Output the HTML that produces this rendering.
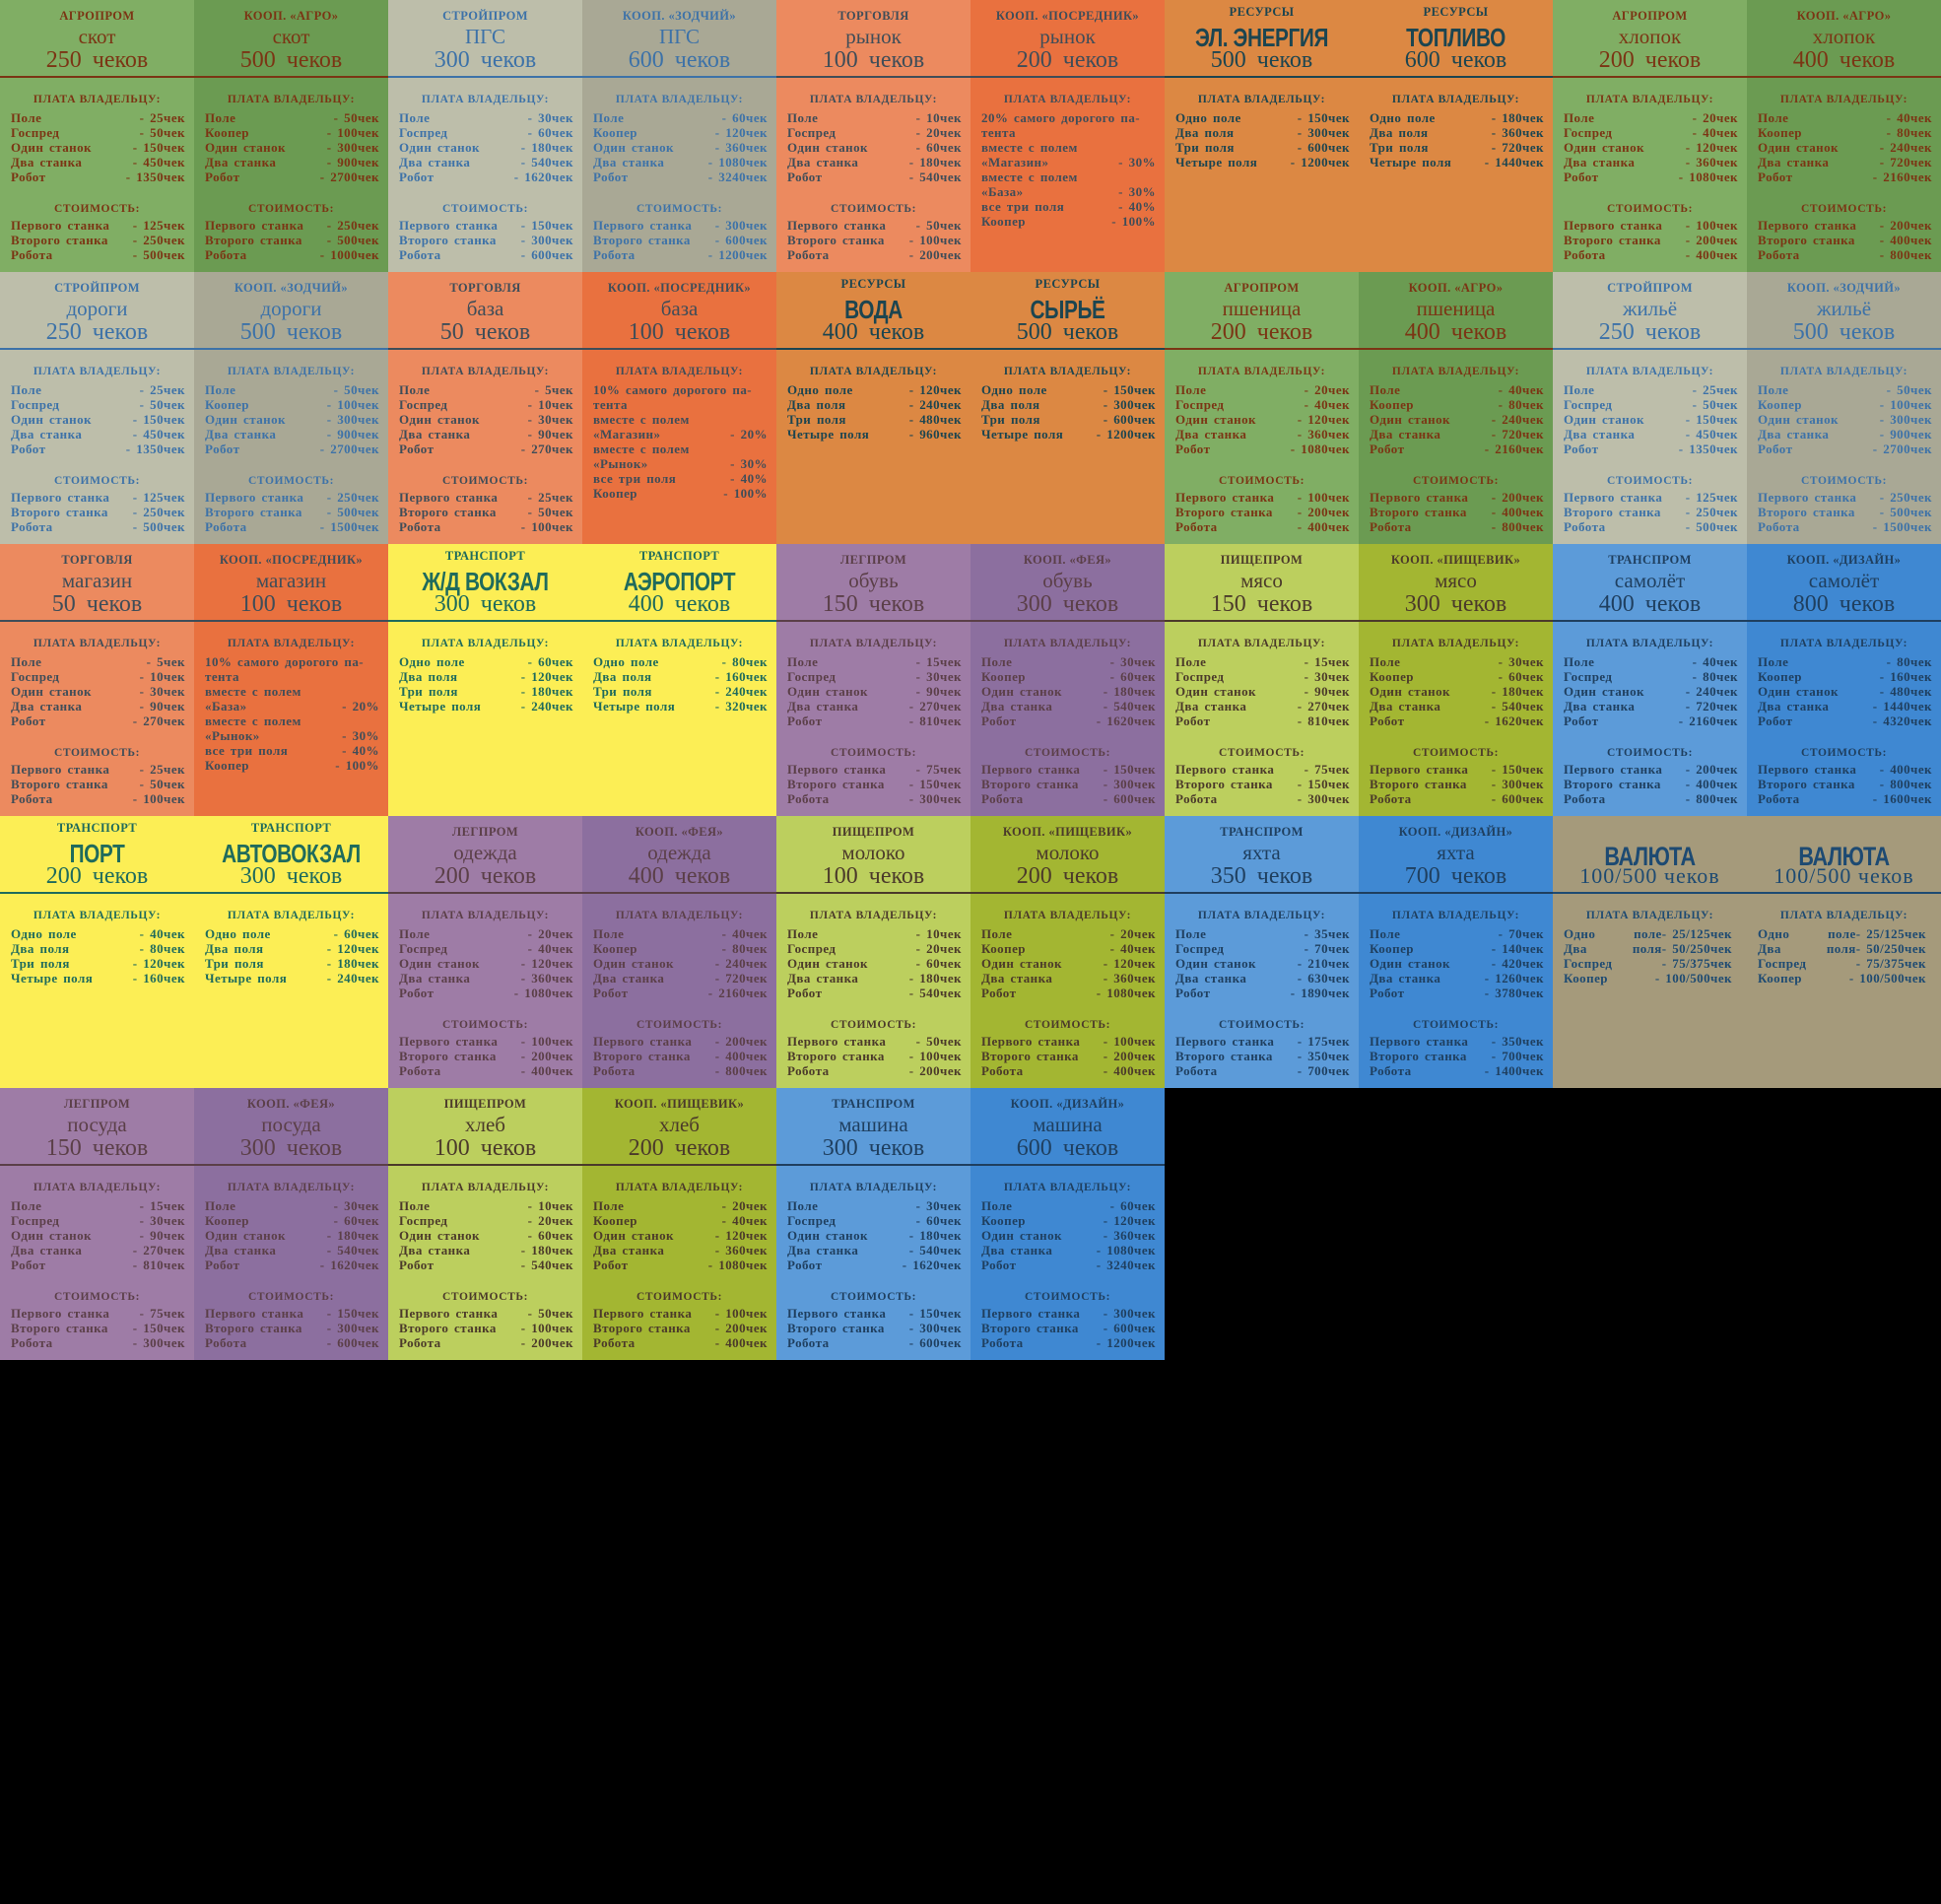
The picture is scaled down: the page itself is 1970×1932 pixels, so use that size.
<!DOCTYPE html>
<html><head><meta charset="utf-8"><style>
*{margin:0;padding:0;box-sizing:border-box}
body{width:1970px;height:1932px;background:#000;position:relative;overflow:hidden;font-family:"Liberation Serif","DejaVu Serif",serif}
.c{position:absolute;width:197px;height:276px}
.k{position:absolute;top:8px;left:0;width:100%;text-align:center;font-weight:bold;font-size:12.5px;letter-spacing:.4px;line-height:16px}
.n{position:absolute;top:25px;left:0;width:100%;text-align:center;font-size:21px;line-height:24px}
.p{position:absolute;top:47px;left:0;width:100%;text-align:center;font-size:24px;line-height:28px;word-spacing:5px}
.b{position:absolute;top:24px;left:0;width:100%;text-align:center;font-family:"Liberation Sans",sans-serif;font-weight:bold;font-size:26px;line-height:28px;letter-spacing:-.5px;transform:scaleX(.8)}
.ln{position:absolute;top:77px;left:0;width:100%;height:2px}
.h{position:absolute;top:94px;left:0;width:100%;text-align:center;font-weight:bold;font-size:11.5px;letter-spacing:.6px;line-height:15px}
.h2{top:205px}
.L{position:absolute;top:112px;left:11px;right:9px}
.L2{top:221px}
.r{display:flex;justify-content:space-between;font-weight:bold;font-size:13px;line-height:15px;white-space:nowrap;letter-spacing:.45px;word-spacing:2px}
.ag{background:#80ae64;color:#7b3514}.ag2{background:#6b9b52;color:#7b3514}
.st{background:#bdbeaa;color:#3d72a8}.st2{background:#a9a895;color:#3d72a8}
.tg{background:#ec8a5f;color:#3f4d58}.tg2{background:#e9713f;color:#3f4d58}
.rs{background:#dc8843;color:#1c4550}
.ye{background:#fcee55;color:#1f6b5c}
.lg{background:#9e7ca6;color:#5b3f48}.lg2{background:#8c6f9f;color:#5b3f48}
.pi{background:#bccf5e;color:#4b3a2a}.pi2{background:#a3b632;color:#4b3a2a}
.tr{background:#5c9bd9;color:#1f3f5f}.tr2{background:#3f88d2;color:#1f3f5f}
.va{background:#a59a7b;color:#1d4a72}
.ln{background:currentColor}
.rs .k,.ye .k{top:4px}
.va .b{top:27px;font-size:27px}
.va .p{font-size:22px;letter-spacing:1px;word-spacing:0}
</style></head><body>

<!-- ROW 0 -->
<div class="c ag" style="left:0;top:0"><div class="k">АГРОПРОМ</div><div class="n">скот</div><div class="p">250 чеков</div><div class="ln"></div><div class="h">ПЛАТА ВЛАДЕЛЬЦУ:</div><div class="L"><div class="r"><span>Поле</span><span>- 25чек</span></div><div class="r"><span>Госпред</span><span>- 50чек</span></div><div class="r"><span>Один станок</span><span>- 150чек</span></div><div class="r"><span>Два станка</span><span>- 450чек</span></div><div class="r"><span>Робот</span><span>- 1350чек</span></div></div><div class="h h2">СТОИМОСТЬ:</div><div class="L L2"><div class="r"><span>Первого станка</span><span>- 125чек</span></div><div class="r"><span>Второго станка</span><span>- 250чек</span></div><div class="r"><span>Робота</span><span>- 500чек</span></div></div></div>

<div class="c ag2" style="left:197px;top:0"><div class="k">КООП. «АГРО»</div><div class="n">скот</div><div class="p">500 чеков</div><div class="ln"></div><div class="h">ПЛАТА ВЛАДЕЛЬЦУ:</div><div class="L"><div class="r"><span>Поле</span><span>- 50чек</span></div><div class="r"><span>Коопер</span><span>- 100чек</span></div><div class="r"><span>Один станок</span><span>- 300чек</span></div><div class="r"><span>Два станка</span><span>- 900чек</span></div><div class="r"><span>Робот</span><span>- 2700чек</span></div></div><div class="h h2">СТОИМОСТЬ:</div><div class="L L2"><div class="r"><span>Первого станка</span><span>- 250чек</span></div><div class="r"><span>Второго станка</span><span>- 500чек</span></div><div class="r"><span>Робота</span><span>- 1000чек</span></div></div></div>

<div class="c st" style="left:394px;top:0"><div class="k">СТРОЙПРОМ</div><div class="n">ПГС</div><div class="p">300 чеков</div><div class="ln"></div><div class="h">ПЛАТА ВЛАДЕЛЬЦУ:</div><div class="L"><div class="r"><span>Поле</span><span>- 30чек</span></div><div class="r"><span>Госпред</span><span>- 60чек</span></div><div class="r"><span>Один станок</span><span>- 180чек</span></div><div class="r"><span>Два станка</span><span>- 540чек</span></div><div class="r"><span>Робот</span><span>- 1620чек</span></div></div><div class="h h2">СТОИМОСТЬ:</div><div class="L L2"><div class="r"><span>Первого станка</span><span>- 150чек</span></div><div class="r"><span>Второго станка</span><span>- 300чек</span></div><div class="r"><span>Робота</span><span>- 600чек</span></div></div></div>

<div class="c st2" style="left:591px;top:0"><div class="k">КООП. «ЗОДЧИЙ»</div><div class="n">ПГС</div><div class="p">600 чеков</div><div class="ln"></div><div class="h">ПЛАТА ВЛАДЕЛЬЦУ:</div><div class="L"><div class="r"><span>Поле</span><span>- 60чек</span></div><div class="r"><span>Коопер</span><span>- 120чек</span></div><div class="r"><span>Один станок</span><span>- 360чек</span></div><div class="r"><span>Два станка</span><span>- 1080чек</span></div><div class="r"><span>Робот</span><span>- 3240чек</span></div></div><div class="h h2">СТОИМОСТЬ:</div><div class="L L2"><div class="r"><span>Первого станка</span><span>- 300чек</span></div><div class="r"><span>Второго станка</span><span>- 600чек</span></div><div class="r"><span>Робота</span><span>- 1200чек</span></div></div></div>

<div class="c tg" style="left:788px;top:0"><div class="k">ТОРГОВЛЯ</div><div class="n">рынок</div><div class="p">100 чеков</div><div class="ln"></div><div class="h">ПЛАТА ВЛАДЕЛЬЦУ:</div><div class="L"><div class="r"><span>Поле</span><span>- 10чек</span></div><div class="r"><span>Госпред</span><span>- 20чек</span></div><div class="r"><span>Один станок</span><span>- 60чек</span></div><div class="r"><span>Два станка</span><span>- 180чек</span></div><div class="r"><span>Робот</span><span>- 540чек</span></div></div><div class="h h2">СТОИМОСТЬ:</div><div class="L L2"><div class="r"><span>Первого станка</span><span>- 50чек</span></div><div class="r"><span>Второго станка</span><span>- 100чек</span></div><div class="r"><span>Робота</span><span>- 200чек</span></div></div></div>

<div class="c tg2" style="left:985px;top:0"><div class="k">КООП. «ПОСРЕДНИК»</div><div class="n">рынок</div><div class="p">200 чеков</div><div class="ln"></div><div class="h">ПЛАТА ВЛАДЕЛЬЦУ:</div><div class="L"><div class="r"><span>20% самого дорогого па-</span></div><div class="r"><span>тента</span></div><div class="r"><span>вместе с полем</span></div><div class="r"><span>«Магазин»</span><span>- 30%</span></div><div class="r"><span>вместе с полем</span></div><div class="r"><span>«База»</span><span>- 30%</span></div><div class="r"><span>все три поля</span><span>- 40%</span></div><div class="r"><span>Коопер</span><span>- 100%</span></div></div></div>

<div class="c rs" style="left:1182px;top:0"><div class="k">РЕСУРСЫ</div><div class="b">ЭЛ. ЭНЕРГИЯ</div><div class="p">500 чеков</div><div class="ln"></div><div class="h">ПЛАТА ВЛАДЕЛЬЦУ:</div><div class="L"><div class="r"><span>Одно поле</span><span>- 150чек</span></div><div class="r"><span>Два поля</span><span>- 300чек</span></div><div class="r"><span>Три поля</span><span>- 600чек</span></div><div class="r"><span>Четыре поля</span><span>- 1200чек</span></div></div></div>

<div class="c rs" style="left:1379px;top:0"><div class="k">РЕСУРСЫ</div><div class="b">ТОПЛИВО</div><div class="p">600 чеков</div><div class="ln"></div><div class="h">ПЛАТА ВЛАДЕЛЬЦУ:</div><div class="L"><div class="r"><span>Одно поле</span><span>- 180чек</span></div><div class="r"><span>Два поля</span><span>- 360чек</span></div><div class="r"><span>Три поля</span><span>- 720чек</span></div><div class="r"><span>Четыре поля</span><span>- 1440чек</span></div></div></div>

<div class="c ag" style="left:1576px;top:0"><div class="k">АГРОПРОМ</div><div class="n">хлопок</div><div class="p">200 чеков</div><div class="ln"></div><div class="h">ПЛАТА ВЛАДЕЛЬЦУ:</div><div class="L"><div class="r"><span>Поле</span><span>- 20чек</span></div><div class="r"><span>Госпред</span><span>- 40чек</span></div><div class="r"><span>Один станок</span><span>- 120чек</span></div><div class="r"><span>Два станка</span><span>- 360чек</span></div><div class="r"><span>Робот</span><span>- 1080чек</span></div></div><div class="h h2">СТОИМОСТЬ:</div><div class="L L2"><div class="r"><span>Первого станка</span><span>- 100чек</span></div><div class="r"><span>Второго станка</span><span>- 200чек</span></div><div class="r"><span>Робота</span><span>- 400чек</span></div></div></div>

<div class="c ag2" style="left:1773px;top:0"><div class="k">КООП. «АГРО»</div><div class="n">хлопок</div><div class="p">400 чеков</div><div class="ln"></div><div class="h">ПЛАТА ВЛАДЕЛЬЦУ:</div><div class="L"><div class="r"><span>Поле</span><span>- 40чек</span></div><div class="r"><span>Коопер</span><span>- 80чек</span></div><div class="r"><span>Один станок</span><span>- 240чек</span></div><div class="r"><span>Два станка</span><span>- 720чек</span></div><div class="r"><span>Робот</span><span>- 2160чек</span></div></div><div class="h h2">СТОИМОСТЬ:</div><div class="L L2"><div class="r"><span>Первого станка</span><span>- 200чек</span></div><div class="r"><span>Второго станка</span><span>- 400чек</span></div><div class="r"><span>Робота</span><span>- 800чек</span></div></div></div>

<!-- ROW 1 -->
<div class="c st" style="left:0;top:276px"><div class="k">СТРОЙПРОМ</div><div class="n">дороги</div><div class="p">250 чеков</div><div class="ln"></div><div class="h">ПЛАТА ВЛАДЕЛЬЦУ:</div><div class="L"><div class="r"><span>Поле</span><span>- 25чек</span></div><div class="r"><span>Госпред</span><span>- 50чек</span></div><div class="r"><span>Один станок</span><span>- 150чек</span></div><div class="r"><span>Два станка</span><span>- 450чек</span></div><div class="r"><span>Робот</span><span>- 1350чек</span></div></div><div class="h h2">СТОИМОСТЬ:</div><div class="L L2"><div class="r"><span>Первого станка</span><span>- 125чек</span></div><div class="r"><span>Второго станка</span><span>- 250чек</span></div><div class="r"><span>Робота</span><span>- 500чек</span></div></div></div>

<div class="c st2" style="left:197px;top:276px"><div class="k">КООП. «ЗОДЧИЙ»</div><div class="n">дороги</div><div class="p">500 чеков</div><div class="ln"></div><div class="h">ПЛАТА ВЛАДЕЛЬЦУ:</div><div class="L"><div class="r"><span>Поле</span><span>- 50чек</span></div><div class="r"><span>Коопер</span><span>- 100чек</span></div><div class="r"><span>Один станок</span><span>- 300чек</span></div><div class="r"><span>Два станка</span><span>- 900чек</span></div><div class="r"><span>Робот</span><span>- 2700чек</span></div></div><div class="h h2">СТОИМОСТЬ:</div><div class="L L2"><div class="r"><span>Первого станка</span><span>- 250чек</span></div><div class="r"><span>Второго станка</span><span>- 500чек</span></div><div class="r"><span>Робота</span><span>- 1500чек</span></div></div></div>

<div class="c tg" style="left:394px;top:276px"><div class="k">ТОРГОВЛЯ</div><div class="n">база</div><div class="p">50 чеков</div><div class="ln"></div><div class="h">ПЛАТА ВЛАДЕЛЬЦУ:</div><div class="L"><div class="r"><span>Поле</span><span>- 5чек</span></div><div class="r"><span>Госпред</span><span>- 10чек</span></div><div class="r"><span>Один станок</span><span>- 30чек</span></div><div class="r"><span>Два станка</span><span>- 90чек</span></div><div class="r"><span>Робот</span><span>- 270чек</span></div></div><div class="h h2">СТОИМОСТЬ:</div><div class="L L2"><div class="r"><span>Первого станка</span><span>- 25чек</span></div><div class="r"><span>Второго станка</span><span>- 50чек</span></div><div class="r"><span>Робота</span><span>- 100чек</span></div></div></div>

<div class="c tg2" style="left:591px;top:276px"><div class="k">КООП. «ПОСРЕДНИК»</div><div class="n">база</div><div class="p">100 чеков</div><div class="ln"></div><div class="h">ПЛАТА ВЛАДЕЛЬЦУ:</div><div class="L"><div class="r"><span>10% самого дорогого па-</span></div><div class="r"><span>тента</span></div><div class="r"><span>вместе с полем</span></div><div class="r"><span>«Магазин»</span><span>- 20%</span></div><div class="r"><span>вместе с полем</span></div><div class="r"><span>«Рынок»</span><span>- 30%</span></div><div class="r"><span>все три поля</span><span>- 40%</span></div><div class="r"><span>Коопер</span><span>- 100%</span></div></div></div>

<div class="c rs" style="left:788px;top:276px"><div class="k">РЕСУРСЫ</div><div class="b">ВОДА</div><div class="p">400 чеков</div><div class="ln"></div><div class="h">ПЛАТА ВЛАДЕЛЬЦУ:</div><div class="L"><div class="r"><span>Одно поле</span><span>- 120чек</span></div><div class="r"><span>Два поля</span><span>- 240чек</span></div><div class="r"><span>Три поля</span><span>- 480чек</span></div><div class="r"><span>Четыре поля</span><span>- 960чек</span></div></div></div>

<div class="c rs" style="left:985px;top:276px"><div class="k">РЕСУРСЫ</div><div class="b">СЫРЬЁ</div><div class="p">500 чеков</div><div class="ln"></div><div class="h">ПЛАТА ВЛАДЕЛЬЦУ:</div><div class="L"><div class="r"><span>Одно поле</span><span>- 150чек</span></div><div class="r"><span>Два поля</span><span>- 300чек</span></div><div class="r"><span>Три поля</span><span>- 600чек</span></div><div class="r"><span>Четыре поля</span><span>- 1200чек</span></div></div></div>

<div class="c ag" style="left:1182px;top:276px"><div class="k">АГРОПРОМ</div><div class="n">пшеница</div><div class="p">200 чеков</div><div class="ln"></div><div class="h">ПЛАТА ВЛАДЕЛЬЦУ:</div><div class="L"><div class="r"><span>Поле</span><span>- 20чек</span></div><div class="r"><span>Госпред</span><span>- 40чек</span></div><div class="r"><span>Один станок</span><span>- 120чек</span></div><div class="r"><span>Два станка</span><span>- 360чек</span></div><div class="r"><span>Робот</span><span>- 1080чек</span></div></div><div class="h h2">СТОИМОСТЬ:</div><div class="L L2"><div class="r"><span>Первого станка</span><span>- 100чек</span></div><div class="r"><span>Второго станка</span><span>- 200чек</span></div><div class="r"><span>Робота</span><span>- 400чек</span></div></div></div>

<div class="c ag2" style="left:1379px;top:276px"><div class="k">КООП. «АГРО»</div><div class="n">пшеница</div><div class="p">400 чеков</div><div class="ln"></div><div class="h">ПЛАТА ВЛАДЕЛЬЦУ:</div><div class="L"><div class="r"><span>Поле</span><span>- 40чек</span></div><div class="r"><span>Коопер</span><span>- 80чек</span></div><div class="r"><span>Один станок</span><span>- 240чек</span></div><div class="r"><span>Два станка</span><span>- 720чек</span></div><div class="r"><span>Робот</span><span>- 2160чек</span></div></div><div class="h h2">СТОИМОСТЬ:</div><div class="L L2"><div class="r"><span>Первого станка</span><span>- 200чек</span></div><div class="r"><span>Второго станка</span><span>- 400чек</span></div><div class="r"><span>Робота</span><span>- 800чек</span></div></div></div>

<div class="c st" style="left:1576px;top:276px"><div class="k">СТРОЙПРОМ</div><div class="n">жильё</div><div class="p">250 чеков</div><div class="ln"></div><div class="h">ПЛАТА ВЛАДЕЛЬЦУ:</div><div class="L"><div class="r"><span>Поле</span><span>- 25чек</span></div><div class="r"><span>Госпред</span><span>- 50чек</span></div><div class="r"><span>Один станок</span><span>- 150чек</span></div><div class="r"><span>Два станка</span><span>- 450чек</span></div><div class="r"><span>Робот</span><span>- 1350чек</span></div></div><div class="h h2">СТОИМОСТЬ:</div><div class="L L2"><div class="r"><span>Первого станка</span><span>- 125чек</span></div><div class="r"><span>Второго станка</span><span>- 250чек</span></div><div class="r"><span>Робота</span><span>- 500чек</span></div></div></div>

<div class="c st2" style="left:1773px;top:276px"><div class="k">КООП. «ЗОДЧИЙ»</div><div class="n">жильё</div><div class="p">500 чеков</div><div class="ln"></div><div class="h">ПЛАТА ВЛАДЕЛЬЦУ:</div><div class="L"><div class="r"><span>Поле</span><span>- 50чек</span></div><div class="r"><span>Коопер</span><span>- 100чек</span></div><div class="r"><span>Один станок</span><span>- 300чек</span></div><div class="r"><span>Два станка</span><span>- 900чек</span></div><div class="r"><span>Робот</span><span>- 2700чек</span></div></div><div class="h h2">СТОИМОСТЬ:</div><div class="L L2"><div class="r"><span>Первого станка</span><span>- 250чек</span></div><div class="r"><span>Второго станка</span><span>- 500чек</span></div><div class="r"><span>Робота</span><span>- 1500чек</span></div></div></div>

<!-- ROW 2 -->
<div class="c tg" style="left:0;top:552px"><div class="k">ТОРГОВЛЯ</div><div class="n">магазин</div><div class="p">50 чеков</div><div class="ln"></div><div class="h">ПЛАТА ВЛАДЕЛЬЦУ:</div><div class="L"><div class="r"><span>Поле</span><span>- 5чек</span></div><div class="r"><span>Госпред</span><span>- 10чек</span></div><div class="r"><span>Один станок</span><span>- 30чек</span></div><div class="r"><span>Два станка</span><span>- 90чек</span></div><div class="r"><span>Робот</span><span>- 270чек</span></div></div><div class="h h2">СТОИМОСТЬ:</div><div class="L L2"><div class="r"><span>Первого станка</span><span>- 25чек</span></div><div class="r"><span>Второго станка</span><span>- 50чек</span></div><div class="r"><span>Робота</span><span>- 100чек</span></div></div></div>

<div class="c tg2" style="left:197px;top:552px"><div class="k">КООП. «ПОСРЕДНИК»</div><div class="n">магазин</div><div class="p">100 чеков</div><div class="ln"></div><div class="h">ПЛАТА ВЛАДЕЛЬЦУ:</div><div class="L"><div class="r"><span>10% самого дорогого па-</span></div><div class="r"><span>тента</span></div><div class="r"><span>вместе с полем</span></div><div class="r"><span>«База»</span><span>- 20%</span></div><div class="r"><span>вместе с полем</span></div><div class="r"><span>«Рынок»</span><span>- 30%</span></div><div class="r"><span>все три поля</span><span>- 40%</span></div><div class="r"><span>Коопер</span><span>- 100%</span></div></div></div>

<div class="c ye" style="left:394px;top:552px"><div class="k">ТРАНСПОРТ</div><div class="b">Ж/Д ВОКЗАЛ</div><div class="p">300 чеков</div><div class="ln"></div><div class="h">ПЛАТА ВЛАДЕЛЬЦУ:</div><div class="L"><div class="r"><span>Одно поле</span><span>- 60чек</span></div><div class="r"><span>Два поля</span><span>- 120чек</span></div><div class="r"><span>Три поля</span><span>- 180чек</span></div><div class="r"><span>Четыре поля</span><span>- 240чек</span></div></div></div>

<div class="c ye" style="left:591px;top:552px"><div class="k">ТРАНСПОРТ</div><div class="b">АЭРОПОРТ</div><div class="p">400 чеков</div><div class="ln"></div><div class="h">ПЛАТА ВЛАДЕЛЬЦУ:</div><div class="L"><div class="r"><span>Одно поле</span><span>- 80чек</span></div><div class="r"><span>Два поля</span><span>- 160чек</span></div><div class="r"><span>Три поля</span><span>- 240чек</span></div><div class="r"><span>Четыре поля</span><span>- 320чек</span></div></div></div>

<div class="c lg" style="left:788px;top:552px"><div class="k">ЛЕГПРОМ</div><div class="n">обувь</div><div class="p">150 чеков</div><div class="ln"></div><div class="h">ПЛАТА ВЛАДЕЛЬЦУ:</div><div class="L"><div class="r"><span>Поле</span><span>- 15чек</span></div><div class="r"><span>Госпред</span><span>- 30чек</span></div><div class="r"><span>Один станок</span><span>- 90чек</span></div><div class="r"><span>Два станка</span><span>- 270чек</span></div><div class="r"><span>Робот</span><span>- 810чек</span></div></div><div class="h h2">СТОИМОСТЬ:</div><div class="L L2"><div class="r"><span>Первого станка</span><span>- 75чек</span></div><div class="r"><span>Второго станка</span><span>- 150чек</span></div><div class="r"><span>Робота</span><span>- 300чек</span></div></div></div>

<div class="c lg2" style="left:985px;top:552px"><div class="k">КООП. «ФЕЯ»</div><div class="n">обувь</div><div class="p">300 чеков</div><div class="ln"></div><div class="h">ПЛАТА ВЛАДЕЛЬЦУ:</div><div class="L"><div class="r"><span>Поле</span><span>- 30чек</span></div><div class="r"><span>Коопер</span><span>- 60чек</span></div><div class="r"><span>Один станок</span><span>- 180чек</span></div><div class="r"><span>Два станка</span><span>- 540чек</span></div><div class="r"><span>Робот</span><span>- 1620чек</span></div></div><div class="h h2">СТОИМОСТЬ:</div><div class="L L2"><div class="r"><span>Первого станка</span><span>- 150чек</span></div><div class="r"><span>Второго станка</span><span>- 300чек</span></div><div class="r"><span>Робота</span><span>- 600чек</span></div></div></div>

<div class="c pi" style="left:1182px;top:552px"><div class="k">ПИЩЕПРОМ</div><div class="n">мясо</div><div class="p">150 чеков</div><div class="ln"></div><div class="h">ПЛАТА ВЛАДЕЛЬЦУ:</div><div class="L"><div class="r"><span>Поле</span><span>- 15чек</span></div><div class="r"><span>Госпред</span><span>- 30чек</span></div><div class="r"><span>Один станок</span><span>- 90чек</span></div><div class="r"><span>Два станка</span><span>- 270чек</span></div><div class="r"><span>Робот</span><span>- 810чек</span></div></div><div class="h h2">СТОИМОСТЬ:</div><div class="L L2"><div class="r"><span>Первого станка</span><span>- 75чек</span></div><div class="r"><span>Второго станка</span><span>- 150чек</span></div><div class="r"><span>Робота</span><span>- 300чек</span></div></div></div>

<div class="c pi2" style="left:1379px;top:552px"><div class="k">КООП. «ПИЩЕВИК»</div><div class="n">мясо</div><div class="p">300 чеков</div><div class="ln"></div><div class="h">ПЛАТА ВЛАДЕЛЬЦУ:</div><div class="L"><div class="r"><span>Поле</span><span>- 30чек</span></div><div class="r"><span>Коопер</span><span>- 60чек</span></div><div class="r"><span>Один станок</span><span>- 180чек</span></div><div class="r"><span>Два станка</span><span>- 540чек</span></div><div class="r"><span>Робот</span><span>- 1620чек</span></div></div><div class="h h2">СТОИМОСТЬ:</div><div class="L L2"><div class="r"><span>Первого станка</span><span>- 150чек</span></div><div class="r"><span>Второго станка</span><span>- 300чек</span></div><div class="r"><span>Робота</span><span>- 600чек</span></div></div></div>

<div class="c tr" style="left:1576px;top:552px"><div class="k">ТРАНСПРОМ</div><div class="n">самолёт</div><div class="p">400 чеков</div><div class="ln"></div><div class="h">ПЛАТА ВЛАДЕЛЬЦУ:</div><div class="L"><div class="r"><span>Поле</span><span>- 40чек</span></div><div class="r"><span>Госпред</span><span>- 80чек</span></div><div class="r"><span>Один станок</span><span>- 240чек</span></div><div class="r"><span>Два станка</span><span>- 720чек</span></div><div class="r"><span>Робот</span><span>- 2160чек</span></div></div><div class="h h2">СТОИМОСТЬ:</div><div class="L L2"><div class="r"><span>Первого станка</span><span>- 200чек</span></div><div class="r"><span>Второго станка</span><span>- 400чек</span></div><div class="r"><span>Робота</span><span>- 800чек</span></div></div></div>

<div class="c tr2" style="left:1773px;top:552px"><div class="k">КООП. «ДИЗАЙН»</div><div class="n">самолёт</div><div class="p">800 чеков</div><div class="ln"></div><div class="h">ПЛАТА ВЛАДЕЛЬЦУ:</div><div class="L"><div class="r"><span>Поле</span><span>- 80чек</span></div><div class="r"><span>Коопер</span><span>- 160чек</span></div><div class="r"><span>Один станок</span><span>- 480чек</span></div><div class="r"><span>Два станка</span><span>- 1440чек</span></div><div class="r"><span>Робот</span><span>- 4320чек</span></div></div><div class="h h2">СТОИМОСТЬ:</div><div class="L L2"><div class="r"><span>Первого станка</span><span>- 400чек</span></div><div class="r"><span>Второго станка</span><span>- 800чек</span></div><div class="r"><span>Робота</span><span>- 1600чек</span></div></div></div>

<!-- ROW 3 -->
<div class="c ye" style="left:0;top:828px"><div class="k">ТРАНСПОРТ</div><div class="b">ПОРТ</div><div class="p">200 чеков</div><div class="ln"></div><div class="h">ПЛАТА ВЛАДЕЛЬЦУ:</div><div class="L"><div class="r"><span>Одно поле</span><span>- 40чек</span></div><div class="r"><span>Два поля</span><span>- 80чек</span></div><div class="r"><span>Три поля</span><span>- 120чек</span></div><div class="r"><span>Четыре поля</span><span>- 160чек</span></div></div></div>

<div class="c ye" style="left:197px;top:828px"><div class="k">ТРАНСПОРТ</div><div class="b">АВТОВОКЗАЛ</div><div class="p">300 чеков</div><div class="ln"></div><div class="h">ПЛАТА ВЛАДЕЛЬЦУ:</div><div class="L"><div class="r"><span>Одно поле</span><span>- 60чек</span></div><div class="r"><span>Два поля</span><span>- 120чек</span></div><div class="r"><span>Три поля</span><span>- 180чек</span></div><div class="r"><span>Четыре поля</span><span>- 240чек</span></div></div></div>

<div class="c lg" style="left:394px;top:828px"><div class="k">ЛЕГПРОМ</div><div class="n">одежда</div><div class="p">200 чеков</div><div class="ln"></div><div class="h">ПЛАТА ВЛАДЕЛЬЦУ:</div><div class="L"><div class="r"><span>Поле</span><span>- 20чек</span></div><div class="r"><span>Госпред</span><span>- 40чек</span></div><div class="r"><span>Один станок</span><span>- 120чек</span></div><div class="r"><span>Два станка</span><span>- 360чек</span></div><div class="r"><span>Робот</span><span>- 1080чек</span></div></div><div class="h h2">СТОИМОСТЬ:</div><div class="L L2"><div class="r"><span>Первого станка</span><span>- 100чек</span></div><div class="r"><span>Второго станка</span><span>- 200чек</span></div><div class="r"><span>Робота</span><span>- 400чек</span></div></div></div>

<div class="c lg2" style="left:591px;top:828px"><div class="k">КООП. «ФЕЯ»</div><div class="n">одежда</div><div class="p">400 чеков</div><div class="ln"></div><div class="h">ПЛАТА ВЛАДЕЛЬЦУ:</div><div class="L"><div class="r"><span>Поле</span><span>- 40чек</span></div><div class="r"><span>Коопер</span><span>- 80чек</span></div><div class="r"><span>Один станок</span><span>- 240чек</span></div><div class="r"><span>Два станка</span><span>- 720чек</span></div><div class="r"><span>Робот</span><span>- 2160чек</span></div></div><div class="h h2">СТОИМОСТЬ:</div><div class="L L2"><div class="r"><span>Первого станка</span><span>- 200чек</span></div><div class="r"><span>Второго станка</span><span>- 400чек</span></div><div class="r"><span>Робота</span><span>- 800чек</span></div></div></div>

<div class="c pi" style="left:788px;top:828px"><div class="k">ПИЩЕПРОМ</div><div class="n">молоко</div><div class="p">100 чеков</div><div class="ln"></div><div class="h">ПЛАТА ВЛАДЕЛЬЦУ:</div><div class="L"><div class="r"><span>Поле</span><span>- 10чек</span></div><div class="r"><span>Госпред</span><span>- 20чек</span></div><div class="r"><span>Один станок</span><span>- 60чек</span></div><div class="r"><span>Два станка</span><span>- 180чек</span></div><div class="r"><span>Робот</span><span>- 540чек</span></div></div><div class="h h2">СТОИМОСТЬ:</div><div class="L L2"><div class="r"><span>Первого станка</span><span>- 50чек</span></div><div class="r"><span>Второго станка</span><span>- 100чек</span></div><div class="r"><span>Робота</span><span>- 200чек</span></div></div></div>

<div class="c pi2" style="left:985px;top:828px"><div class="k">КООП. «ПИЩЕВИК»</div><div class="n">молоко</div><div class="p">200 чеков</div><div class="ln"></div><div class="h">ПЛАТА ВЛАДЕЛЬЦУ:</div><div class="L"><div class="r"><span>Поле</span><span>- 20чек</span></div><div class="r"><span>Коопер</span><span>- 40чек</span></div><div class="r"><span>Один станок</span><span>- 120чек</span></div><div class="r"><span>Два станка</span><span>- 360чек</span></div><div class="r"><span>Робот</span><span>- 1080чек</span></div></div><div class="h h2">СТОИМОСТЬ:</div><div class="L L2"><div class="r"><span>Первого станка</span><span>- 100чек</span></div><div class="r"><span>Второго станка</span><span>- 200чек</span></div><div class="r"><span>Робота</span><span>- 400чек</span></div></div></div>

<div class="c tr" style="left:1182px;top:828px"><div class="k">ТРАНСПРОМ</div><div class="n">яхта</div><div class="p">350 чеков</div><div class="ln"></div><div class="h">ПЛАТА ВЛАДЕЛЬЦУ:</div><div class="L"><div class="r"><span>Поле</span><span>- 35чек</span></div><div class="r"><span>Госпред</span><span>- 70чек</span></div><div class="r"><span>Один станок</span><span>- 210чек</span></div><div class="r"><span>Два станка</span><span>- 630чек</span></div><div class="r"><span>Робот</span><span>- 1890чек</span></div></div><div class="h h2">СТОИМОСТЬ:</div><div class="L L2"><div class="r"><span>Первого станка</span><span>- 175чек</span></div><div class="r"><span>Второго станка</span><span>- 350чек</span></div><div class="r"><span>Робота</span><span>- 700чек</span></div></div></div>

<div class="c tr2" style="left:1379px;top:828px"><div class="k">КООП. «ДИЗАЙН»</div><div class="n">яхта</div><div class="p">700 чеков</div><div class="ln"></div><div class="h">ПЛАТА ВЛАДЕЛЬЦУ:</div><div class="L"><div class="r"><span>Поле</span><span>- 70чек</span></div><div class="r"><span>Коопер</span><span>- 140чек</span></div><div class="r"><span>Один станок</span><span>- 420чек</span></div><div class="r"><span>Два станка</span><span>- 1260чек</span></div><div class="r"><span>Робот</span><span>- 3780чек</span></div></div><div class="h h2">СТОИМОСТЬ:</div><div class="L L2"><div class="r"><span>Первого станка</span><span>- 350чек</span></div><div class="r"><span>Второго станка</span><span>- 700чек</span></div><div class="r"><span>Робота</span><span>- 1400чек</span></div></div></div>

<div class="c va" style="left:1576px;top:828px"><div class="b">ВАЛЮТА</div><div class="p">100/500 чеков</div><div class="ln"></div><div class="h">ПЛАТА ВЛАДЕЛЬЦУ:</div><div class="L" style="right:15px"><div class="r"><span>Одно</span><span>поле- 25/125чек</span></div><div class="r"><span>Два</span><span>поля- 50/250чек</span></div><div class="r"><span>Госпред</span><span>- 75/375чек</span></div><div class="r"><span>Коопер</span><span>- 100/500чек</span></div></div></div>

<div class="c va" style="left:1773px;top:828px"><div class="b">ВАЛЮТА</div><div class="p">100/500 чеков</div><div class="ln"></div><div class="h">ПЛАТА ВЛАДЕЛЬЦУ:</div><div class="L" style="right:15px"><div class="r"><span>Одно</span><span>поле- 25/125чек</span></div><div class="r"><span>Два</span><span>поля- 50/250чек</span></div><div class="r"><span>Госпред</span><span>- 75/375чек</span></div><div class="r"><span>Коопер</span><span>- 100/500чек</span></div></div></div>

<!-- ROW 4 -->
<div class="c lg" style="left:0;top:1104px"><div class="k">ЛЕГПРОМ</div><div class="n">посуда</div><div class="p">150 чеков</div><div class="ln"></div><div class="h">ПЛАТА ВЛАДЕЛЬЦУ:</div><div class="L"><div class="r"><span>Поле</span><span>- 15чек</span></div><div class="r"><span>Госпред</span><span>- 30чек</span></div><div class="r"><span>Один станок</span><span>- 90чек</span></div><div class="r"><span>Два станка</span><span>- 270чек</span></div><div class="r"><span>Робот</span><span>- 810чек</span></div></div><div class="h h2">СТОИМОСТЬ:</div><div class="L L2"><div class="r"><span>Первого станка</span><span>- 75чек</span></div><div class="r"><span>Второго станка</span><span>- 150чек</span></div><div class="r"><span>Робота</span><span>- 300чек</span></div></div></div>

<div class="c lg2" style="left:197px;top:1104px"><div class="k">КООП. «ФЕЯ»</div><div class="n">посуда</div><div class="p">300 чеков</div><div class="ln"></div><div class="h">ПЛАТА ВЛАДЕЛЬЦУ:</div><div class="L"><div class="r"><span>Поле</span><span>- 30чек</span></div><div class="r"><span>Коопер</span><span>- 60чек</span></div><div class="r"><span>Один станок</span><span>- 180чек</span></div><div class="r"><span>Два станка</span><span>- 540чек</span></div><div class="r"><span>Робот</span><span>- 1620чек</span></div></div><div class="h h2">СТОИМОСТЬ:</div><div class="L L2"><div class="r"><span>Первого станка</span><span>- 150чек</span></div><div class="r"><span>Второго станка</span><span>- 300чек</span></div><div class="r"><span>Робота</span><span>- 600чек</span></div></div></div>

<div class="c pi" style="left:394px;top:1104px"><div class="k">ПИЩЕПРОМ</div><div class="n">хлеб</div><div class="p">100 чеков</div><div class="ln"></div><div class="h">ПЛАТА ВЛАДЕЛЬЦУ:</div><div class="L"><div class="r"><span>Поле</span><span>- 10чек</span></div><div class="r"><span>Госпред</span><span>- 20чек</span></div><div class="r"><span>Один станок</span><span>- 60чек</span></div><div class="r"><span>Два станка</span><span>- 180чек</span></div><div class="r"><span>Робот</span><span>- 540чек</span></div></div><div class="h h2">СТОИМОСТЬ:</div><div class="L L2"><div class="r"><span>Первого станка</span><span>- 50чек</span></div><div class="r"><span>Второго станка</span><span>- 100чек</span></div><div class="r"><span>Робота</span><span>- 200чек</span></div></div></div>

<div class="c pi2" style="left:591px;top:1104px"><div class="k">КООП. «ПИЩЕВИК»</div><div class="n">хлеб</div><div class="p">200 чеков</div><div class="ln"></div><div class="h">ПЛАТА ВЛАДЕЛЬЦУ:</div><div class="L"><div class="r"><span>Поле</span><span>- 20чек</span></div><div class="r"><span>Коопер</span><span>- 40чек</span></div><div class="r"><span>Один станок</span><span>- 120чек</span></div><div class="r"><span>Два станка</span><span>- 360чек</span></div><div class="r"><span>Робот</span><span>- 1080чек</span></div></div><div class="h h2">СТОИМОСТЬ:</div><div class="L L2"><div class="r"><span>Первого станка</span><span>- 100чек</span></div><div class="r"><span>Второго станка</span><span>- 200чек</span></div><div class="r"><span>Робота</span><span>- 400чек</span></div></div></div>

<div class="c tr" style="left:788px;top:1104px"><div class="k">ТРАНСПРОМ</div><div class="n">машина</div><div class="p">300 чеков</div><div class="ln"></div><div class="h">ПЛАТА ВЛАДЕЛЬЦУ:</div><div class="L"><div class="r"><span>Поле</span><span>- 30чек</span></div><div class="r"><span>Госпред</span><span>- 60чек</span></div><div class="r"><span>Один станок</span><span>- 180чек</span></div><div class="r"><span>Два станка</span><span>- 540чек</span></div><div class="r"><span>Робот</span><span>- 1620чек</span></div></div><div class="h h2">СТОИМОСТЬ:</div><div class="L L2"><div class="r"><span>Первого станка</span><span>- 150чек</span></div><div class="r"><span>Второго станка</span><span>- 300чек</span></div><div class="r"><span>Робота</span><span>- 600чек</span></div></div></div>

<div class="c tr2" style="left:985px;top:1104px"><div class="k">КООП. «ДИЗАЙН»</div><div class="n">машина</div><div class="p">600 чеков</div><div class="ln"></div><div class="h">ПЛАТА ВЛАДЕЛЬЦУ:</div><div class="L"><div class="r"><span>Поле</span><span>- 60чек</span></div><div class="r"><span>Коопер</span><span>- 120чек</span></div><div class="r"><span>Один станок</span><span>- 360чек</span></div><div class="r"><span>Два станка</span><span>- 1080чек</span></div><div class="r"><span>Робот</span><span>- 3240чек</span></div></div><div class="h h2">СТОИМОСТЬ:</div><div class="L L2"><div class="r"><span>Первого станка</span><span>- 300чек</span></div><div class="r"><span>Второго станка</span><span>- 600чек</span></div><div class="r"><span>Робота</span><span>- 1200чек</span></div></div></div>

</body></html>
